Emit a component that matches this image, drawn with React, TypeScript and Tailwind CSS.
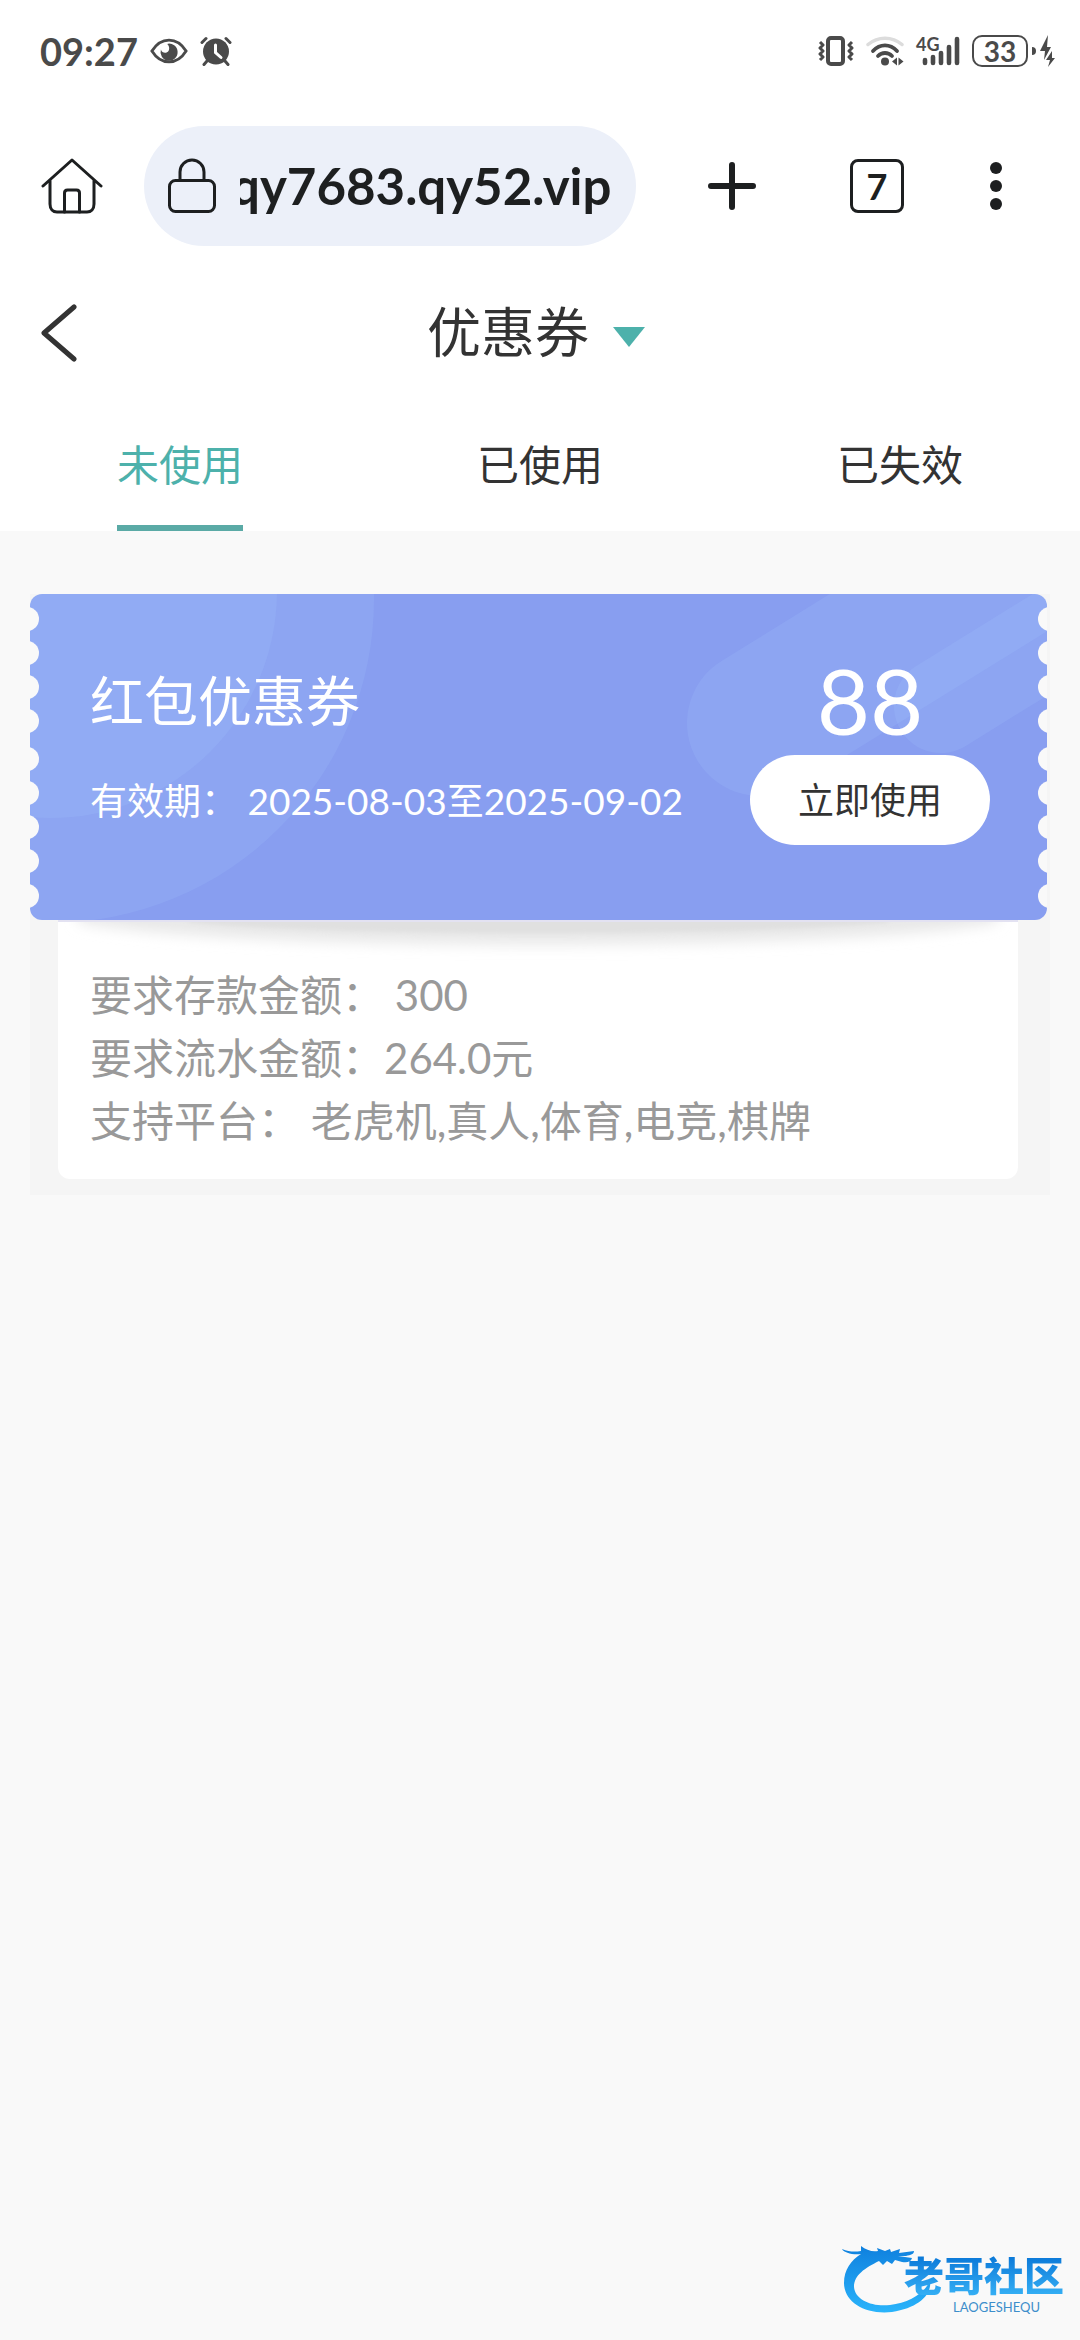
import React, { useEffect, useRef, useState } from 'react';

const TABS = ['未使用', '已使用', '已失效'];

// vertical centres of the punched holes on the ticket's edges
const HOLES = [25, 59, 93, 127, 165, 199, 233, 267, 302];

interface Coupon {
  title: string;
  amount: string;
  from: string;
  to: string;
  deposit: string;
  turnover: string;
  platforms: string[];
}

const COUPON: Coupon = {
  title: '红包优惠券',
  amount: '88',
  from: '2025-08-03',
  to: '2025-09-02',
  deposit: '300',
  turnover: '264.0元',
  platforms: ['老虎机', '真人', '体育', '电竞', '棋牌']
};

function StatusBar() {
  return (
    <div className="flex h-[102px] items-center justify-between pl-10 pr-6 text-[#4a4a4a]">
      <div className="flex items-center gap-3">
        <span className="text-[38px] font-bold leading-none">09:27</span>
        <svg width="38" height="28" viewBox="0 0 40 28" fill="none">
          <path d="M2 14C7 6 13 2.500 20 2.500S33 6 38 14C33 22 27 25.500 20 25.500S7 22 2 14Z" stroke="currentColor" strokeWidth="3" />
          <path d="M18 6.500a9 9 0 1 1-6.500 6c1 4 6 4.500 8 1.500 1.500-3 .5-6-1.500-7.500z" fill="currentColor" />
        </svg>
        <svg width="32" height="30" viewBox="0 0 32 30" fill="none" stroke="currentColor" strokeLinecap="round">
          <circle cx="16" cy="15.500" r="13" fill="currentColor" stroke="none" />
          <path d="M2 6.500 6 2.500M30 6.500 26 2.500" strokeWidth="3" />
          <path d="M7 25 4 28.500M25 25l3 3.500" strokeWidth="3" />
          <path d="M15.500 9v7.500l5.500 5" stroke="white" strokeWidth="3" />
        </svg>
      </div>

      <div className="flex items-center gap-3">
        <svg width="36" height="32" viewBox="0 0 36 32" fill="none" stroke="currentColor">
          <rect x="10" y="3" width="15" height="26" rx="3" strokeWidth="4" />
          <path d="M2 7l3 3-3 3 3 3-3 3 3 3-3 3M34 7l-3 3 3 3-3 3 3 3-3 3 3 3" strokeWidth="3" strokeLinejoin="round" />
        </svg>
        <svg width="38" height="32" viewBox="0 0 38 32" fill="none" strokeLinecap="round">
          <path d="M2 9.500C12 1 26 1 36 9.500" stroke="#dcdcdc" strokeWidth="3.500" />
          <path d="M7 16C14 8.500 24 8.500 31 16" stroke="currentColor" strokeWidth="3.800" />
          <path d="M12 21c4-4 10-4 14 0" stroke="currentColor" strokeWidth="3.800" />
          <circle cx="19" cy="26.500" r="4" fill="currentColor" />
          <path d="M31 22.500v8l-5-4zM32.500 22.500v8l5-4z" fill="currentColor" />
        </svg>
        <div className="relative h-8 w-11">
          <span className="absolute left-0 top-0 text-[18px] font-bold leading-none">4G</span>
          <svg className="absolute bottom-0 right-0" width="38" height="32" viewBox="0 0 38 32" stroke="currentColor" strokeWidth="4.600" strokeLinecap="round">
            <path d="M3 25v3M11 22v6M19 18v10M27 12v16M35 4v24" />
          </svg>
        </div>
        <div className="flex items-center gap-1">
          <span className="flex h-8 w-14 items-center justify-center rounded-[10px] border-2 border-[#4a4a4a] text-[28px] font-bold leading-none">33</span>
          <span className="h-2 w-1 rounded-r bg-[#4a4a4a]" />
          <svg width="16" height="32" viewBox="0 0 16 32" fill="currentColor">
            <path d="M8 0 0 16h5L4 25l7-13H7zM12 16l-6 9h4l-2 7 7-9h-3z" />
          </svg>
        </div>
      </div>
    </div>
  );
}

function AddressBar() {
  const input = useRef<HTMLInputElement>(null);

  // long hosts keep their end in view
  useEffect(() => {
    if (input.current) input.current.scrollLeft = input.current.scrollWidth;
  }, []);

  return (
    <div className="flex items-center pl-10 pr-3.5 pt-6 text-[#1d1f20]">
      <button type="button" aria-label="主页" className="mr-10">
        <svg width="64" height="56" viewBox="0 0 64 56" fill="none" stroke="currentColor" strokeWidth="3" strokeLinecap="round" strokeLinejoin="round">
          <path d="M3 28 32 2l29 26M10 22v24c0 5 3 8 7 8h30c4 0 7-3 7-8V22" />
          <path d="M24.500 54V35c0-2 1-3 3-3h9c2 0 3 1 3 3v19" />
        </svg>
      </button>
      <div className="flex h-[120px] min-w-0 flex-1 items-center gap-6 rounded-full bg-[#ecf0f9] px-6">
        <svg className="shrink-0" width="48" height="56" viewBox="0 0 48 56" fill="none" stroke="currentColor" strokeWidth="3">
          <rect x="1.500" y="22.500" width="45" height="31" rx="6" />
          <path d="M12 22V14a12 12 0 0 1 24 0v8" />
        </svg>
        <input
          ref={input}
          aria-label="网址"
          className="w-full min-w-0 bg-transparent text-right text-[51px] font-bold leading-[64px] outline-none"
          defaultValue="qy7683.qy52.vip"
        />
      </div>
      <button type="button" aria-label="新标签页" className="flex w-48 justify-center">
        <svg width="48" height="48" viewBox="0 0 48 48" stroke="currentColor" strokeWidth="6" strokeLinecap="round">
          <path d="M24 3v42M3 24h42" />
        </svg>
      </button>
      <button type="button" aria-label="标签页" className="flex w-[98px] justify-center">
        <span className="flex h-[54px] w-[54px] items-center justify-center rounded-lg border-[3px] border-[#1d1f20] text-[36px] font-bold leading-none">7</span>
      </button>
      <button type="button" aria-label="更多" className="flex w-[140px] justify-center">
        <svg width="12" height="48" viewBox="0 0 12 48" fill="currentColor">
          <circle cx="6" cy="6" r="6" />
          <circle cx="6" cy="24" r="6" />
          <circle cx="6" cy="42" r="6" />
        </svg>
      </button>
    </div>
  );
}

function PageHeader() {
  return (
    <header className="grid h-[174px] grid-cols-[1fr_auto_1fr] items-center pl-9 pr-11 text-[#333]">
      <button type="button" aria-label="返回" className="justify-self-start pl-1">
        <svg width="38" height="58" viewBox="0 0 38 58" fill="none" stroke="currentColor" strokeWidth="5" strokeLinecap="round" strokeLinejoin="round">
          <path d="M34 3 4 29l30 26" />
        </svg>
      </button>
      <button type="button" className="flex items-center gap-6">
        <h1 className="text-[54px] leading-[80px]">优惠券</h1>
        <svg className="mt-2" width="32" height="20" viewBox="0 0 32 20" fill="#4db1ab">
          <path d="M0 0h32L16 20z" />
        </svg>
      </button>
    </header>
  );
}

function TicketBackground() {
  return (
    <svg className="absolute inset-0 h-full w-full" viewBox="0 0 1017 326" preserveAspectRatio="none">
      <defs>
        <mask id="ticket">
          <rect width="1017" height="326" rx="12" fill="white" />
          {HOLES.map(y => (
            <React.Fragment key={y}>
              <circle cx="-3" cy={y} r="12" />
              <circle cx="1020" cy={y} r="12" />
            </React.Fragment>
          ))}
        </mask>
      </defs>
      <rect width="12" height="300" y="12" fill="#f9f9f9" />
      <rect width="12" height="300" x="1005" y="12" fill="#f9f9f9" />
      <g mask="url(#ticket)">
        <rect width="1017" height="326" fill="#889ef0" />
        <g fill="#a8c8ff" fillOpacity="0.17">
          <circle cx="20" cy="5" r="324" />
          <circle cx="20" cy="-3" r="227" />
        </g>
        <g stroke="#a8c8ff" strokeOpacity="0.17" strokeLinecap="round">
          <path d="M730 129 1155-134" strokeWidth="146" />
          <path d="M911 112 1336-151" strokeWidth="94" />
        </g>
      </g>
    </svg>
  );
}

function CouponCard({ coupon }: { coupon: Coupon }) {
  return (
    <article className="bg-[#f5f5f5] pb-4">
      <div className="relative mr-[3px] flex h-[326px] items-center justify-between pl-[60px] pr-[57px] text-white">
        <TicketBackground />
        <div className="relative flex flex-col gap-8 pb-6">
          <h2 className="text-[54px] leading-[80px]">{coupon.title}</h2>
          <p className="text-[37px] leading-[54px]">
            有效期：&nbsp;{coupon.from}至{coupon.to}
          </p>
        </div>
        <div className="relative flex w-60 flex-col items-center pb-6">
          <span className="text-[92px] leading-[110px]">{coupon.amount}</span>
          <button type="button" className="h-[90px] w-full rounded-full bg-white text-[36px] leading-none text-[#333]">
            立即使用
          </button>
        </div>
      </div>

      <div className="relative ml-7 mr-8 overflow-hidden rounded-b-xl border-t-2 border-[#e3e2f2] bg-white px-8 pb-[26px] pt-[42px]">
        <svg className="absolute left-0 top-0 h-11 w-full" viewBox="0 0 960 44" preserveAspectRatio="none">
          <defs>
            <filter id="soft" x="-10%" y="-50%" width="120%" height="250%">
              <feGaussianBlur stdDeviation="7" />
            </filter>
            <filter id="edge" x="-10%" y="-50%" width="120%" height="250%">
              <feGaussianBlur stdDeviation="2" />
            </filter>
          </defs>
          <path d="M20-20H940V0C800 30 160 30 20 0Z" fill="#e8e8e8" filter="url(#soft)" />
          <path d="M130-6H830V0C700 15 260 15 130 0Z" fill="#e0e0e0" filter="url(#edge)" />
        </svg>
        <div className="relative text-[42px] leading-[63px] text-[#999]">
          <p>要求存款金额：&nbsp;{coupon.deposit}</p>
          <p>要求流水金额：{coupon.turnover}</p>
          <p>支持平台：&nbsp;{coupon.platforms.join(',')}</p>
        </div>
      </div>
    </article>
  );
}

function Watermark() {
  return (
    <div className="absolute bottom-6 right-4 h-[72px] w-[224px]">
      <svg className="absolute inset-0" width="224" height="72" viewBox="0 0 224 72">
        <defs>
          <linearGradient id="wave" x1="0" y1="0" x2="0" y2="1">
            <stop offset="0" stopColor="#0f80de" />
            <stop offset="1" stopColor="#2ab4fb" />
          </linearGradient>
        </defs>
        <path
          d="M2 5c7 3 13 3 19 2V2c5 4 11 6 17 5l-1-3 8 3 5-2 1 3 9-3-1 4 15-2c0 3-3 4-8 5l-8 0 14 2c-1 4-5 5-10 4l-7-2-3 4-5-3-4 4-4-4C25 24 14 31 14 43c1 13 18 20 36 18 18-2 34-11 40-24 2 14-12 27-38 31C25 71 4 58 4 39 4 26 11 16 21 10 13 11 4 9 2 5Z"
          fill="url(#wave)"
        />
      </svg>
      <div className="relative flex flex-col items-end gap-1 pt-3">
        <span className="bg-linear-to-b from-[#0a78d8] to-[#35b0f5] bg-clip-text text-[40px] font-black leading-[40px] text-transparent">
          老哥社区
        </span>
        <span className="pr-6 text-[13px] leading-[14px] text-[#3d8ecb]">LAOGESHEQU</span>
      </div>
    </div>
  );
}

export default function App() {
  const [tab, setTab] = useState(0);

  return (
    <div className="relative min-h-screen bg-[#f9f9f9] font-['Lato','Noto_Sans_CJK_SC',sans-serif]">
      <div className="bg-white">
        <StatusBar />
        <AddressBar />
        <PageHeader />
        <nav className="grid h-[111px] grid-cols-3 justify-items-center">
          {TABS.map((label, i) => (
            <button
              key={label}
              type="button"
              onClick={() => setTab(i)}
              className={
                'border-b-[6px] pb-7 pt-3.5 text-[42px] leading-[63px] ' +
                (tab === i ? 'border-[#5aaaa6] text-[#4db1ab]' : 'border-transparent text-[#333]')
              }
            >
              {label}
            </button>
          ))}
        </nav>
      </div>
      <main className="px-[30px] pt-[63px]">{tab === 0 && <CouponCard coupon={COUPON} />}</main>
      <Watermark />
    </div>
  );
}
